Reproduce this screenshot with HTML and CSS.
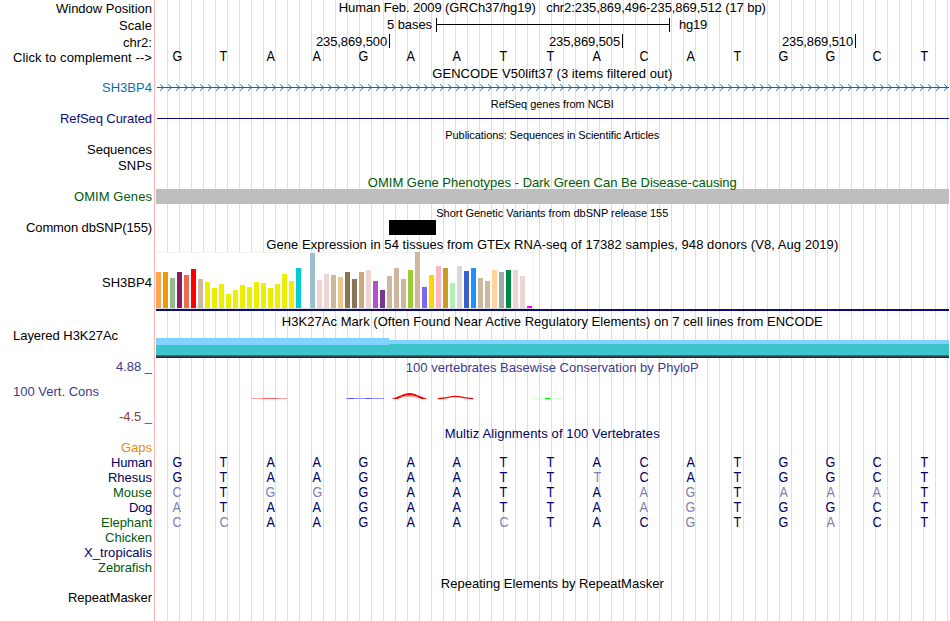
FILE: index.html
```html
<!DOCTYPE html>
<html lang="en">
<head>
<meta charset="utf-8">
<title>Genome Browser - chr2:235,869,496-235,869,512</title>
<link rel="stylesheet" href="styles.css">
</head>
<body>
<main class="browser">
  <section class="labels">
    <div class="label h17"><span data-w="96">Window Position</span></div>
    <div class="label h17"><span data-w="33">Scale</span></div>
    <div class="label h15"><span data-w="29">chr2:</span></div>
    <div class="label h30"><span data-w="139">Click to complement --&gt;</span></div>
    <div class="label h31 gene"><span data-w="50">SH3BP4</span></div>
    <div class="label h31 navy"><span data-w="92">RefSeq Curated</span></div>
    <div class="label h16"><span data-w="65">Sequences</span></div>
    <div class="label h31"><span data-w="34">SNPs</span></div>
    <div class="label h31 green"><span data-w="78">OMIM Genes</span></div>
    <div class="label h55"><span data-w="126">Common dbSNP(155)</span></div>
    <div class="label h53"><span data-w="50">SH3BP4</span></div>
    <div class="label h31 left"><span data-w="105">Layered H3K27Ac</span></div>
    <div class="label h25 cons"><span data-w="36">4.88 _</span></div>
    <div class="label h25 left cons"><span data-w="86">100 Vert. Cons</span></div>
    <div class="label h31 low"><span data-w="33">-4.5 _</span></div>
    <div class="label h15 orange"><span data-w="31">Gaps</span></div>
    <div class="label h15 deep"><span data-w="41">Human</span></div>
    <div class="label h15 deep"><span data-w="44">Rhesus</span></div>
    <div class="label h15 green"><span data-w="39">Mouse</span></div>
    <div class="label h15 deep"><span data-w="23">Dog</span></div>
    <div class="label h15 green"><span data-w="51">Elephant</span></div>
    <div class="label h15 green"><span data-w="47">Chicken</span></div>
    <div class="label h15 deep"><span data-w="68">X_tropicalis</span></div>
    <div class="label h30 green"><span data-w="54">Zebrafish</span></div>
    <div class="label h15"><span data-w="84">RepeatMasker</span></div>
  </section>
  <section class="tracks">
    <div class="title h17"><span data-w="427">Human Feb. 2009 (GRCh37/hg19) &nbsp; chr2:235,869,496-235,869,512 (17 bp)</span></div>
    <div class="scale">
      <span class="scale-name" data-w="45">5 bases</span>
      <span class="scale-bar"></span>
      <span data-w="28">hg19</span>
    </div>
    <div class="ruler">
      <span class="tick"><span data-w="71">235,869,500</span></span>
      <span class="tick"><span data-w="71">235,869,505</span></span>
      <span class="tick"><span data-w="71">235,869,510</span></span>
    </div>
    <div class="bases h17 black" data-seq="GTAAGAATTACATGGCT"></div>
    <div class="title h17"><span data-w="240">GENCODE V50lift37 (3 items filtered out)</span></div>
    <svg class="gene-line" width="792" height="9" viewBox="0 0 792 9">
      <defs><pattern id="chevron" width="8" height="9" patternUnits="userSpaceOnUse" x="2"><path d="M1.300 1.300 L4.300 4.500 L1.300 7.700"/></pattern></defs>
      <rect width="792" height="9" fill="url(#chevron)"/>
      <rect class="stem" y="4" width="792" height="1"/>
    </svg>
    <div class="title small h20"><span data-w="123">RefSeq genes from NCBI</span></div>
    <div class="refseq-line"></div>
    <div class="title small h46"><span data-w="214">Publications: Sequences in Scientific Articles</span></div>
    <div class="title green h14"><span data-w="369">OMIM Gene Phenotypes - Dark Green Can Be Disease-causing</span></div>
    <div class="omim"></div>
    <div class="title small h13"><span data-w="232">Short Genetic Variants from dbSNP release 155</span></div>
    <div class="snp"></div>
    <div class="title h15"><span data-w="572">Gene Expression in 54 tissues from GTEx RNA-seq of 17382 samples, 948 donors (V8, Aug 2019)</span></div>
    <div class="gtex"></div>
    <div class="gtex-line"></div>
    <div class="title h24"><span data-w="541">H3K27Ac Mark (Often Found Near Active Regulatory Elements) on 7 cell lines from ENCODE</span></div>
    <svg class="h3k" width="793" height="20" viewBox="0 0 793 20" shape-rendering="crispEdges">
      <path fill="#80d4ff" d="M0 0H233V2H793V8H0z"/>
      <path fill="#3dc3cc" d="M0 7H233V6H793V17H0z"/>
      <path fill="#366f91" d="M0 17H793V18H0z"/>
      <path fill="#34474d" d="M0 18H793V19H0z"/>
      <path fill="#281d4d" d="M0 19H793V20H0z"/>
    </svg>
    <div class="title cons after-h3k"><span data-w="293">100 vertebrates Basewise Conservation by PhyloP</span></div>
    <svg class="phylop" width="793" height="44" viewBox="156 382 793 44">
      <path d="M252 398.5H287" stroke="#ffa0a0"/><path d="M262 398.5H278" stroke="#ff6060"/>
      <path d="M346 398.5H384" stroke="#9090ff"/><path d="M348 398.5H354M366 398.5H371" stroke="#5555ff"/>
      <path d="M391.500 399 405 393.700Q409.500 392.400 414 393.700L427.500 399H421.500L413 395.500H406L397.500 399z" fill="#f00"/>
      <path d="M401 396.700H418" stroke="#ff8080" stroke-width=".8"/>
      <path d="M438 398.700Q447 398 452 396.700Q455 396 459 396.700Q465 398 473 398.700" stroke="#f00" stroke-width="1.3"/>
      <path d="M531 398.500H564" stroke="#d5ffd5"/><path d="M545 398.500H550.500" stroke="#0e0" stroke-width="1.4"/>
    </svg>
    <div class="title deep h29"><span data-w="215">Multiz Alignments of 100 Vertebrates</span></div>
    <div class="bases h15" data-seq="GTAAGAATTACATGGCT"></div>
    <div class="bases h15" data-seq="GTAAGAATTtCATGGCT"></div>
    <div class="bases h15" data-seq="cTggGAATTAagTaaaT"></div>
    <div class="bases h15" data-seq="aTAAGAATTAagTGGCT"></div>
    <div class="bases h61" data-seq="ccAAGAAcTACgTGaCT"></div>
    <div class="title h15"><span data-w="223">Repeating Elements by RepeatMasker</span></div>
  </section>
</main>
<script src="tracks.js"></script>
</body>
</html>
```
FILE: styles.css
```css
* { box-sizing: border-box; }
body { margin: 0; background: #fff; color: #000; font: 13px/15px "Liberation Sans", Arial, sans-serif; }
.browser { display: flex; width: 949px; height: 621px; overflow: hidden; white-space: nowrap; }
.labels { width: 155px; flex: none; padding-top: 1px; border-right: 1px solid #ffb4b4; }
.label { display: flex; justify-content: flex-end; padding-right: 2px; }
.label.left { justify-content: flex-start; padding-left: 13px; }
.tracks { flex: none; width: 794px; padding-left: 1px;
  background: repeating-linear-gradient(to right, #dcdcf5 0 1px, transparent 1px 12px) 12px 0 no-repeat; }
.title { display: flex; justify-content: center; padding-right: .4px; }
.small { font-size: 11px; line-height: 13px; }
.h13 { height: 13px; } .h14 { height: 14px; } .h15 { height: 15px; } .h16 { height: 16px; }
.h17 { height: 17px; } .h20 { height: 20px; } .h24 { height: 24px; } .h25 { height: 25px; }
.h29 { height: 29px; } .h30 { height: 30px; } .h31 { height: 31px; } .h46 { height: 46px; }
.h53 { height: 53px; } .h55 { height: 55px; } .h61 { height: 61px; }
.gene { color: #0c70b0; }
.navy { color: #0c0c78; }
.deep { color: #000064; }
.green { color: #005a0a; }
.orange { color: #e68c14; }
.cons { color: #3c3c8c; }
.low { color: #8c3c3c; }
.scale { display: flex; height: 17px; }
.scale-name { width: 276px; text-align: right; }
.scale-bar { width: 234px; height: 14px; margin: 1px 9px 0 4px; border: solid #000; border-width: 0 1px;
  background: linear-gradient(#000, #000) 0 6px / 100% 1px no-repeat; }
.ruler { display: flex; height: 15px; }
.tick { width: 233px; height: 14px; padding: 1px 2px 0 0; line-height: 14px; border-right: 1px solid #000; display: flex; justify-content: flex-end; }
.tick:first-child { width: 234px; }
.bases { display: grid; grid-template-columns: repeat(17, 46.68px); margin-left: -2.3px; width: 795px; color: #000064; font-size: 14px; justify-items: center; align-items: start; }
.bases span { transform: scaleX(.9); }
.bases.black { color: #000; }
.bases .mismatch { color: #8080b0; }
.gene-line { display: block; margin-left: 1px; }
.gene-line path { fill: none; stroke: #085c94; stroke-width: .9; }
.gene-line .stem { fill: #0c64a0; }
.gene-line + .title { margin-top: 6px; }
.refseq-line { height: 1px; margin: 0 0 10px 1px; background: #0c0c78; }
.omim { height: 15px; background: #bebebe; margin-bottom: 3px; }
.snp { height: 15px; width: 47px; margin: 0 0 2px 233px; background: #000; }
.gtex { display: flex; align-items: flex-end; gap: 2px; width: 378px; height: 57px; background: #fff; border: solid #f2f2f2; border-width: 1px 1px 1px 0; border-bottom-color: #d8d8d8; }
.bar { width: 5px; flex: none; }
.gtex-line { height: 2px; background: #0c0c78; margin-bottom: 3px; }
.h3k { display: block; }
.after-h3k { margin-top: 2px; height: 22px; }
.phylop { display: block; fill: none; }
```
FILE: tracks.js
```js
// Lowercase letters mark bases that differ from the human sequence.
document.querySelectorAll('.bases').forEach(function (row) {
  Array.from(row.dataset.seq).forEach(function (c) {
    var s = document.createElement('span');
    s.textContent = c.toUpperCase();
    if (c !== c.toUpperCase()) s.className = 'mismatch';
    row.appendChild(s);
  });
});

// Median expression per tissue: [height, colour].
var yellow = '#eeee00', tan = '#cdb79e', pink = '#eed5d2';
var tissues = [
  [36, '#ffa54f'], [36, '#ee9a00'], [30, '#8fbc8f'], [36, '#8b1c62'], [33, '#ee6a50'], [39, '#ff0000'], [29, tan],
  [26, yellow], [20, yellow], [24, yellow], [14, yellow], [18, yellow], [23, yellow], [21, yellow], [26, yellow],
  [25, yellow], [20, yellow], [24, yellow], [34, yellow], [27, yellow], [40, '#00cdcd'], [0, '#ee82ee'],
  [55, '#9ac0cd'], [28, pink], [34, pink], [33, tan], [31, '#eec591'], [36, '#8b7355'], [29, '#8b7355'],
  [36, '#cdaa7d'], [38, pink], [27, '#b452cd'], [18, '#7a378b'], [32, tan], [40, tan], [29, tan], [38, '#9acd32'],
  [56, tan], [21, '#7a67ee'], [33, '#ffd700'], [42, '#ffb6c1'], [40, '#cd9b1d'], [25, '#b4eeb4'], [42, '#d9d9d9'],
  [37, '#3a5fcd'], [40, '#1e90ff'], [30, tan], [27, tan], [38, '#ffd39b'], [36, '#a6a6a6'], [38, '#008b45'],
  [38, pink], [32, pink], [2, '#ff00ff']
];
var chart = document.querySelector('.gtex');
tissues.forEach(function (t) {
  var b = document.createElement('span');
  b.className = 'bar';
  b.style.height = t[0] + 'px';
  b.style.background = t[1];
  chart.appendChild(b);
});

// Spread each caption over its nominal width.
document.querySelectorAll('[data-w]').forEach(function (el) {
  var r = document.createRange();
  r.selectNodeContents(el);
  var w = r.getBoundingClientRect().width;
  el.style.letterSpacing = ((el.dataset.w - w) / el.textContent.length) + 'px';
});
```
